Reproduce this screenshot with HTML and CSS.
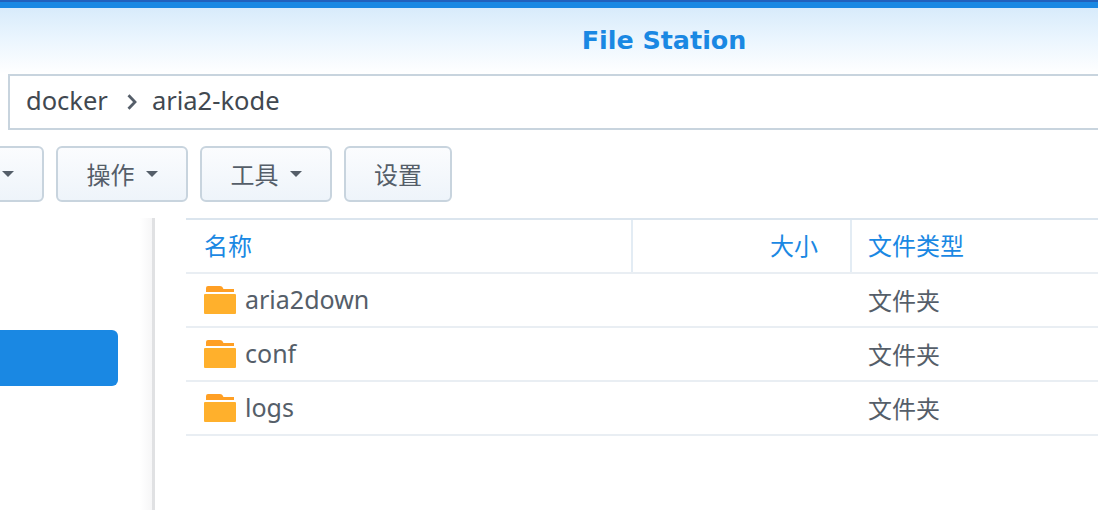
FILE: index.html
```html
<!DOCTYPE html>
<html lang="zh">
<head>
<meta charset="utf-8">
<title>File Station</title>
<link rel="stylesheet" href="styles.css">
</head>
<body>
<div class="app">
  <header class="titlebar"><span class="title">File Station</span></header>
  <div class="pathbar">
    <span>docker</span>
    <svg class="chev" width="10" height="16" viewBox="0 0 10 16"><path d="M1.500 1.200 8 8 1.500 14.800" fill="none" stroke="#555e69" stroke-width="2.800"/></svg>
    <span>aria2-kode</span>
  </div>
  <div class="toolbar">
    <button class="btn btn-cut"><i class="caret"></i></button>
    <button class="btn btn-menu">操作<i class="caret"></i></button>
    <button class="btn btn-menu">工具<i class="caret"></i></button>
    <button class="btn btn-plain">设置</button>
  </div>
  <div class="main">
    <aside class="sidebar"><div class="selected"></div></aside>
    <section class="list">
      <div class="row head">
        <div class="cell c-name">名称</div>
        <div class="cell c-size">大小</div>
        <div class="cell c-type">文件类型</div>
      </div>
      <div class="row">
        <div class="cell c-name"><svg class="folder" width="34" height="30" viewBox="0 0 34 30"><use href="#f"/></svg><span class="fname">aria2down</span></div>
        <div class="cell c-size"></div>
        <div class="cell c-type">文件夹</div>
      </div>
      <div class="row">
        <div class="cell c-name"><svg class="folder" width="34" height="30" viewBox="0 0 34 30"><use href="#f"/></svg><span class="fname">conf</span></div>
        <div class="cell c-size"></div>
        <div class="cell c-type">文件夹</div>
      </div>
      <div class="row">
        <div class="cell c-name"><svg class="folder" width="34" height="30" viewBox="0 0 34 30"><use href="#f"/></svg><span class="fname">logs</span></div>
        <div class="cell c-size"></div>
        <div class="cell c-type">文件夹</div>
      </div>
    </section>
  </div>
</div>
<svg width="0" height="0" class="defs"><defs><g id="f">
  <path d="M3 3a2 2 0 0 1 2-2h12c1.500 0 2.200.8 2.800 1.800l.7 1.200H31v3H3z" fill="#ff9f24"/>
  <path d="M1 10a1 1 0 0 1 1-1h30a1 1 0 0 1 1 1v18a1 1 0 0 1-1 1H2a1 1 0 0 1-1-1z" fill="#ffb02c"/>
</g></defs></svg>
</body>
</html>
```
FILE: styles.css
```css
* { box-sizing: border-box; }
html, body { margin: 0; height: 510px; overflow: hidden; background: #fff; }
body { font-family: "Noto Sans", "Noto Sans CJK SC", sans-serif; color: #555e69; }
.defs { position: absolute; }
.app { width: 1098px; height: 510px; display: flex; flex-direction: column; overflow: hidden; }
.titlebar {
  height: 74px;
  border-top: 2px solid #2161bd;
  background: linear-gradient(#1a88e3 0, #1a88e3 6px, #d8ebfb 6px, #eaf5fe 36px, #ffffff 72px);
  display: flex;
  justify-content: center;
  padding: 16px 0 0 230px;
}
.title { font: bold 25.400px/44px "DejaVu Sans", sans-serif; color: #1a88e3; }
.pathbar {
  margin-left: 8px;
  width: 1200px;
  height: 56px;
  flex: none;
  border: 2px solid #c8d4de;
  display: flex;
  align-items: center;
  padding: 0 0 4px 16px;
  font-size: 25.500px;
  color: #414850;
}
.chev { margin: 4px 15px 0 19px; flex: none; }
.toolbar { margin-top: 16px; height: 56px; flex: none; display: flex; gap: 12px; }
.btn {
  height: 56px;
  border: 2px solid #c8d4de;
  border-radius: 6px;
  background: linear-gradient(#fbfcfe, #eef4fa);
  color: #555e69;
  font: 24px/1 "Noto Sans CJK SC", sans-serif;
  display: flex;
  align-items: center;
  justify-content: center;
  padding: 0;
}
.btn-cut { width: 88px; margin-left: -44px; justify-content: flex-end; padding-right: 28px; }
.btn-menu { width: 132px; gap: 11px; }
.btn-plain { width: 108px; }
.caret { width: 0; height: 0; border-style: solid; border-width: 6px 6.500px 0; border-color: #555e69 transparent transparent; }
.main { flex: 1; display: flex; margin-top: 16px; min-height: 0; }
.sidebar {
  width: 155px;
  flex: none;
  border-right: 3px solid #e0e1e3;
  padding-top: 112px;
  background: linear-gradient(90deg, #fff 140px, #f6f6f7 152px);
}
.selected { width: 118px; height: 56px; background: #1a88e3; border-radius: 0 6px 6px 0; }
.list { margin-left: 31px; flex: 1; border-top: 2px solid #dbe5ee; }
.row { display: flex; height: 54px; border-bottom: 2px solid #e9eef3; font-size: 24px; padding-bottom: 2px; }
.head { color: #1a88e3; padding-bottom: 0; }
.head .cell { padding-bottom: 4px; }
.cell { display: flex; align-items: center; font-family: "Noto Sans CJK SC", sans-serif; }
.c-name { width: 445px; padding-left: 17px; }
.head .c-name { padding-left: 18px; }
.c-size { width: 221px; justify-content: flex-end; padding-right: 32px; }
.c-type { flex: 1; padding-left: 16px; }
.head .c-size { border-left: 2px solid #e3ecf4; border-right: 2px solid #e3ecf4; }
.folder { margin: 2px 8px 0 0; flex: none; }
.fname { font: 25px "Noto Sans", sans-serif; color: #555e69; }
```
